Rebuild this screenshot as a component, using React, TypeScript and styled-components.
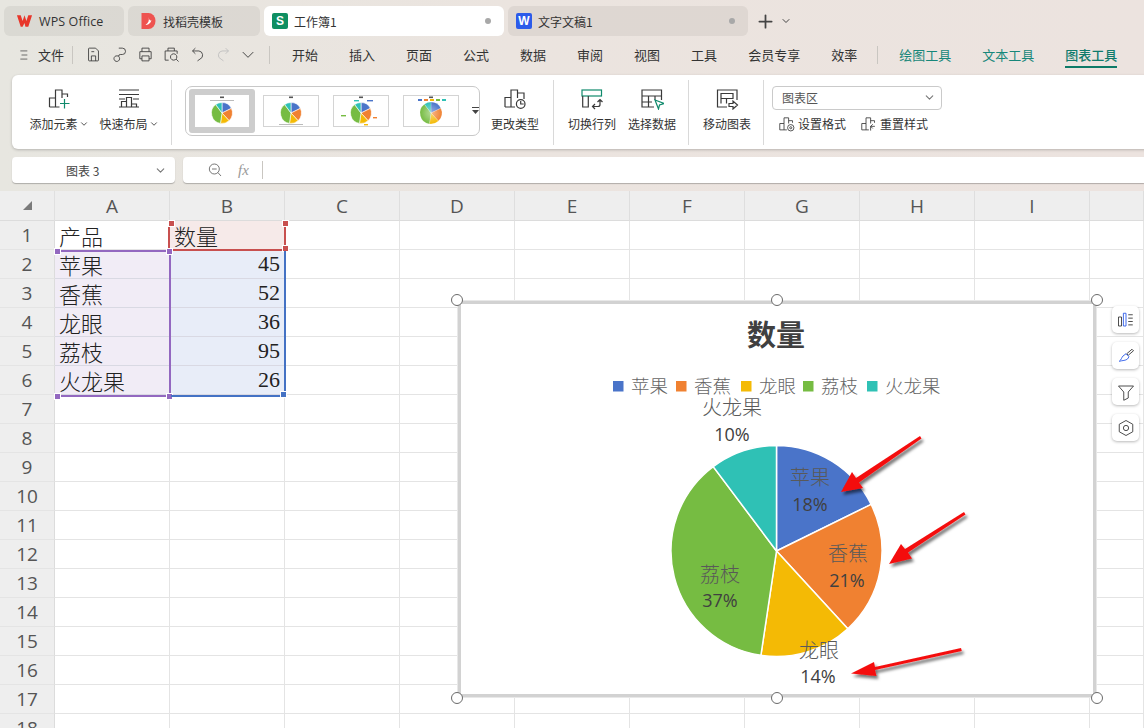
import React from 'react';
import styled, { createGlobalStyle } from 'styled-components';
import { ChevronDown, Plus } from 'lucide-react';

const UI_FONT = '"Noto Sans CJK SC", "Liberation Sans", sans-serif';
const SHEET_FONT = '"Liberation Serif", "Noto Sans CJK SC", serif';

const GlobalStyle = createGlobalStyle`
  html, body { margin: 0; padding: 0; }
  body { font-family: ${UI_FONT}; overflow: hidden; }
`;

const Page = styled.div`
  position: relative;
  width: 1144px;
  height: 728px;
  overflow: hidden;
  background: linear-gradient(90deg, #e7e6e0 0%, #ebe4df 45%, #ece3df 100%);
  color: #333;
`;

/* title bar */
const TabBar = styled.div`
  display: flex;
  align-items: center;
  gap: 4px;
  height: 30px;
  padding: 6px 0 0 4px;
`;

const Tab = styled.div<{ $width: number; $pad?: number; $active?: boolean }>`
  display: flex;
  align-items: center;
  gap: 6px;
  box-sizing: border-box;
  width: ${({ $width }) => $width}px;
  height: 30px;
  padding: 0 10px 0 ${({ $pad }) => $pad ?? 12}px;
  border-radius: 6px;
  background: ${({ $active }) => ($active ? '#fff' : 'rgba(60, 50, 40, 0.07)')};
  font-size: 12px;
  color: #333;
`;

const TabTitle = styled.span`
  flex: 1;
`;

const LatinTitle = styled.span`
  font: 12.5px 'Open Sans', 'Liberation Sans', sans-serif;
  letter-spacing: 0.1px;
`;

const TabDot = styled.i`
  width: 6px;
  height: 6px;
  margin-right: 3px;
  border-radius: 50%;
  background: #a8a8a8;
`;

const LogoSquare = styled.span<{ $color: string }>`
  display: flex;
  align-items: center;
  justify-content: center;
  width: 16px;
  height: 16px;
  border-radius: 2px;
  background: ${({ $color }) => $color};
  color: #fff;
  font: bold 12px 'Liberation Sans', sans-serif;
`;

const NewTab = styled.div`
  display: flex;
  align-items: center;
  gap: 4px;
  margin-left: 3px;
  color: #444;
`;

/* menu row */
const MenuRow = styled.div`
  display: flex;
  align-items: center;
  height: 39px;
  padding: 0 0 2px 18px;
  box-sizing: border-box;
  font-size: 13px;
`;

const FileMenu = styled.div`
  display: flex;
  align-items: center;
  gap: 6px;
  width: 54px;
`;

const Sep = styled.span`
  width: 1px;
  height: 18px;
  background: #c9c6c1;
`;

const ToolSep = styled(Sep)`
  margin-right: -10px;
`;

const QuickTools = styled.div`
  display: flex;
  align-items: center;
  gap: 9px;
  padding: 0 14px 0 12px;
`;

const MenuItems = styled.div`
  display: flex;
  align-items: center;
  gap: 31px;
  margin-left: 22px;
`;

const ToolMenus = styled.div`
  display: flex;
  align-items: center;
  gap: 31px;
  margin-left: 20px;
`;

const ToolMenu = styled.span<{ $active?: boolean }>`
  position: relative;
  color: ${({ $active }) => ($active ? '#0f7b6c' : '#17877a')};
  font-weight: ${({ $active }) => ($active ? 500 : 400)};
  &::after {
    content: '';
    display: ${({ $active }) => ($active ? 'block' : 'none')};
    position: absolute;
    left: 0;
    right: 0;
    bottom: -4px;
    height: 2px;
    background: #0d7a68;
  }
`;

/* ribbon */
const Ribbon = styled.div`
  display: flex;
  align-items: center;
  box-sizing: border-box;
  width: 1140px;
  height: 74px;
  margin-left: 12px;
  border-radius: 6px;
  background: #fff;
  box-shadow: 0 1px 3px rgba(0, 0, 0, 0.22);
`;

const Group = styled.div<{ $width: number; $pad?: number; $end?: boolean }>`
  display: flex;
  flex-direction: ${({ $end }) => ($end ? 'column' : 'row')};
  box-sizing: border-box;
  width: ${({ $width }) => $width}px;
  height: 65px;
  padding-left: ${({ $pad }) => $pad ?? 0}px;
  border-right: ${({ $end }) => ($end ? 'none' : '1px solid #d9d9d9')};
`;

const RibbonButton = styled.div<{ $width: number }>`
  display: flex;
  flex-direction: column;
  align-items: center;
  width: ${({ $width }) => $width}px;
  padding-top: 5px;
  font-size: 12px;
  color: #333;
  white-space: nowrap;
`;

const IconSlot = styled.div`
  display: flex;
  align-items: center;
  justify-content: center;
  height: 26px;
  margin-bottom: 4px;
`;

const Label = styled.span`
  display: flex;
  align-items: center;
  gap: 1px;
  height: 18px;
`;

const Gallery = styled.div`
  display: flex;
  align-items: center;
  box-sizing: border-box;
  width: 295px;
  height: 50px;
  margin-top: 6px;
  padding-left: 2px;
  border: 1px solid #c8c8c8;
  border-radius: 7px;
`;

const Thumb = styled.div<{ $selected?: boolean }>`
  display: flex;
  align-items: center;
  justify-content: center;
  box-sizing: border-box;
  width: ${({ $selected }) => ($selected ? 68 : 56)}px;
  height: ${({ $selected }) => ($selected ? 44 : 32)}px;
  margin-right: ${({ $selected }) => ($selected ? 9 : 15)}px;
  margin-left: ${({ $selected }) => ($selected ? 1 : -1)}px;
  border: ${({ $selected }) => ($selected ? '6px solid #cdcdcd' : '1px solid #d4d4d4')};
  border-radius: ${({ $selected }) => ($selected ? 3 : 0)}px;
  background: #fff;
`;

const GalleryMore = styled.div`
  display: flex;
  flex-direction: column;
  align-items: center;
  margin-left: -3px;
  color: #444;
`;

const AreaSelect = styled.div`
  display: flex;
  align-items: center;
  justify-content: space-between;
  box-sizing: border-box;
  width: 170px;
  height: 24px;
  margin: 6px 0 0 8px;
  padding: 0 5px 0 9px;
  border: 1px solid #cacaca;
  border-radius: 4px;
  font-size: 12px;
  color: #555;
`;

const InlineTools = styled.div`
  display: flex;
  gap: 14px;
  margin: 5px 0 0 14px;
`;

const InlineTool = styled.div`
  display: flex;
  align-items: center;
  gap: 3px;
  font-size: 12px;
`;

/* formula bar */
const FormulaRow = styled.div`
  display: flex;
  gap: 8px;
  height: 26px;
  margin: 8px 0 8px 12px;
`;

const NameBox = styled.div`
  display: flex;
  align-items: center;
  justify-content: space-between;
  box-sizing: border-box;
  width: 163px;
  padding: 0 8px 0 54px;
  border-radius: 4px;
  background: #fff;
  box-shadow: 0 1px 1px rgba(0, 0, 0, 0.25);
  font-size: 12px;
  color: #444;
`;

const FormulaBox = styled.div`
  display: flex;
  align-items: center;
  flex: 1;
  padding-left: 24px;
  border-radius: 4px 0 0 4px;
  background: #fff;
  box-shadow: 0 1px 1px rgba(0, 0, 0, 0.25);
  color: #666;
`;

const FxMark = styled.span`
  margin: 0 13px 0 15px;
  font: italic 15px 'Liberation Serif', serif;
  color: #999;
`;

/* sheet */
const Sheet = styled.div`
  position: relative;
  height: 537px;
  overflow: hidden;
  background: #fff;
`;

const Grid = styled.div`
  display: grid;
  grid-template-columns: 55px repeat(9, 115px) 54px;
  grid-template-rows: 30px repeat(18, 29px);
`;

const Corner = styled.div`
  display: flex;
  align-items: center;
  justify-content: center;
  background: #eeeeee;
  border-right: 1px solid #e0e0e0;
  border-bottom: 1px solid #dcdcdc;
  box-sizing: border-box;
`;

const ColHead = styled.div`
  display: flex;
  align-items: center;
  justify-content: center;
  box-sizing: border-box;
  background: #eeeeee;
  border-right: 1px solid #dedede;
  border-bottom: 1px solid #dcdcdc;
  font: 19px 'Open Sans', 'Liberation Sans', sans-serif;
  color: #555;
`;

const RowHead = styled(ColHead)`
  border-right: 1px solid #dcdcdc;
  border-bottom: 1px solid #e4e4e4;
`;

const Cell = styled.div<{ $bg?: string; $right?: boolean }>`
  display: flex;
  align-items: center;
  justify-content: ${({ $right }) => ($right ? 'flex-end' : 'flex-start')};
  box-sizing: border-box;
  padding: 0 4px;
  background: ${({ $bg }) => $bg ?? '#fff'};
  border-right: 1px solid #e4e4e4;
  border-bottom: 1px solid ${({ $bg }) => ($bg ? '#d9d9e3' : '#e4e4e4')};
  font: 22px ${SHEET_FONT};
  font-weight: 300;
  color: #222;
`;

const Range = styled.div<{
  $x: number;
  $y: number;
  $w: number;
  $h: number;
  $color: string;
  $sides: string;
}>`
  position: absolute;
  left: ${({ $x }) => $x}px;
  top: ${({ $y }) => $y}px;
  width: ${({ $w }) => $w}px;
  height: ${({ $h }) => $h}px;
  box-sizing: border-box;
  border-style: solid;
  border-color: ${({ $color }) => $color};
  border-width: ${({ $sides }) => $sides};
`;

const RangeHandle = styled.i<{ $color: string; $x: number; $y: number }>`
  position: absolute;
  left: ${({ $x }) => $x}px;
  top: ${({ $y }) => $y}px;
  width: 5px;
  height: 5px;
  background: ${({ $color }) => $color};
  border: 1px solid #fff;
`;

const ChartFrame = styled.div`
  position: absolute;
  left: 458px;
  top: 110px;
  width: 638px;
  height: 396px;
  box-sizing: border-box;
  border: 3px solid #d2d2d2;
  background: #fff;
  outline: 1px solid #e8e8e8;
`;

const ChartCanvas = styled.svg`
  position: absolute;
  left: -3px;
  top: -3px;
  overflow: visible;
`;

const SizeHandle = styled.i<{ $x: number; $y: number }>`
  position: absolute;
  left: ${({ $x }) => $x - 6}px;
  top: ${({ $y }) => $y - 6}px;
  width: 10px;
  height: 10px;
  border: 1px solid #6a6a6a;
  border-radius: 50%;
  background: #fff;
`;

const SideTools = styled.div`
  position: absolute;
  left: 1112px;
  top: 115px;
  display: flex;
  flex-direction: column;
  gap: 9px;
`;

const SideTool = styled.div`
  display: flex;
  align-items: center;
  justify-content: center;
  width: 27px;
  height: 27px;
  border-radius: 5px;
  background: #fff;
  box-shadow: 0 1px 3px rgba(0, 0, 0, 0.28);
`;

const ChartLabel = styled.text<{ $size?: number; $bold?: boolean; $color?: string }>`
  font-family: ${SHEET_FONT};
  font-size: ${({ $size }) => $size ?? 20}px;
  font-weight: ${({ $bold }) => ($bold ? 700 : 300)};
  fill: ${({ $color }) => $color ?? '#595959'};
  text-anchor: middle;
`;

const Percent = styled.text`
  font-family: 'Open Sans', 'Liberation Sans', sans-serif;
  font-size: 18px;
  fill: #404040;
  text-anchor: middle;
`;

const LegendText = styled.text`
  font-family: ${SHEET_FONT};
  font-size: 18.5px;
  font-weight: 300;
  fill: #666;
`;

const fruits = [
  { name: '苹果', value: 45, color: '#4a74c9' },
  { name: '香蕉', value: 52, color: '#f08131' },
  { name: '龙眼', value: 36, color: '#f4ba05' },
  { name: '荔枝', value: 95, color: '#76bc42' },
  { name: '火龙果', value: 26, color: '#2fc1b5' },
];

const columns = ['A', 'B', 'C', 'D', 'E', 'F', 'G', 'H', 'I', ''];

const piePaths = (cx: number, cy: number, r: number) => {
  const total = fruits.reduce((sum, f) => sum + f.value, 0);
  let angle = 0;
  return fruits.map(f => {
    const start = angle;
    angle += (f.value / total) * Math.PI * 2;
    const x1 = cx + r * Math.sin(start);
    const y1 = cy - r * Math.cos(start);
    const x2 = cx + r * Math.sin(angle);
    const y2 = cy - r * Math.cos(angle);
    const large = angle - start > Math.PI ? 1 : 0;
    return {
      color: f.color,
      d: `M${cx} ${cy}L${x1} ${y1}A${r} ${r} 0 ${large} 1 ${x2} ${y2}Z`,
    };
  });
};

const MiniPie: React.FC<{ variant: number }> = ({ variant }) => (
  <svg width="54" height="30" viewBox="0 0 54 30">
    <rect x="25" y="0.5" width="4" height="1.6" fill="#555" />
    {variant === 0 && <rect x="15" y="4" width="24" height="1" fill="#bbb" />}
    {variant === 2 && (
      <>
        <rect x="20" y="4" width="5" height="1.4" fill="#2fc1b5" />
        <rect x="33" y="4" width="6" height="1.4" fill="#4a74c9" />
        <rect x="39" y="21" width="4" height="1.4" fill="#f08131" />
        <rect x="7" y="19" width="5" height="1.4" fill="#76bc42" />
        <rect x="30" y="28" width="4" height="1.4" fill="#f4ba05" />
      </>
    )}
    {variant === 3 && (
      <>
        <defs>
          <radialGradient id="thumbGloss">
            <stop offset="0" stopColor="#fff" stopOpacity="0.45" />
            <stop offset="1" stopColor="#fff" stopOpacity="0" />
          </radialGradient>
        </defs>
        {fruits.map((f, i) => (
          <rect key={f.name} x={14 + i * 6} y="3" width="4" height="2" fill={f.color} />
        ))}
      </>
    )}
    {piePaths(27, 17, variant === 3 ? 11 : 10.5).map(p => (
      <path key={p.color} d={p.d} fill={p.color} stroke="#fff" strokeWidth={variant === 3 ? 0.2 : 0.6} />
    ))}
    {variant === 3 && <circle cx="27" cy="17" r="11" fill="url(#thumbGloss)" />}
    {variant === 1 && <rect x="15" y="28" width="24" height="1" fill="#bbb" />}
  </svg>
);

const Ico: React.FC<{ size?: number; children: React.ReactNode; stroke?: string }> = ({
  size = 24,
  children,
  stroke = '#3a3a3a',
}) => (
  <svg width={size} height={size} viewBox="0 0 24 24" fill="none" stroke={stroke} strokeWidth="1.2">
    {children}
  </svg>
);

const ChartBars = () => <path d="M2.5 21V12h6v9M2.5 21h10M8.5 12V4h6.5v8M15 8h5.5v3" />;
const TEAL = '#0f8a6c';

const Toolbar = [
  <path key="s" d="M5 4a1 1 0 0 1 1-1h9l4 4v13a1 1 0 0 1-1 1H6a1 1 0 0 1-1-1zM9 21v-7h6v7M9 8h4" />,
  <path key="a" d="M11 3h5a4 4 0 0 1 0 9h-3a2 2 0 0 0-2 2v1a4 4 0 1 1-4-1h4" />,
  <path key="p" d="M7 8V3h10v5M7 18H4V8h16v10h-3M7 14h10v7H7z" />,
  <path key="q" d="M7 7V3h9v4M8 20H3V7h17v4M15 11a4.5 4.5 0 1 0 .1 0zM18.5 18.5 22 22" />,
  <path key="u" d="M9 3 5 7l4 4M5 7h9a6 6 0 0 1 1.500 11.500L12 21" />,
];

const App: React.FC = () => (
  <Page>
    <GlobalStyle />
    <TabBar>
      <Tab $width={120}>
        <svg width="17" height="14" viewBox="0 0 18 14">
          <path d="M1 1h4l2 6 2-6 2 6 2-6h4l-4 12h-3L9 9l-2 4H5z" fill="#e8362a" />
        </svg>
        <LatinTitle>WPS Office</LatinTitle>
      </Tab>
      <Tab $width={132}>
        <svg width="17" height="18" viewBox="0 0 16 18">
          <path d="M1 1h7a7 8 0 0 1 0 16H1z" fill="#ee5350" />
          <path d="M8 5c1 3 0 6-3 8 2 0 5-1 6-5-1 1-2 1-3-3z" fill="#fff" />
        </svg>
        <span>找稻壳模板</span>
      </Tab>
      <Tab $width={240} $pad={8} $active>
        <LogoSquare $color="#0f8f62">S</LogoSquare>
        <TabTitle>工作簿1</TabTitle>
        <TabDot />
      </Tab>
      <Tab $width={240} $pad={8}>
        <LogoSquare $color="#2c5bea">W</LogoSquare>
        <TabTitle>文字文稿1</TabTitle>
        <TabDot />
      </Tab>
      <NewTab>
        <Plus size={21} strokeWidth={2} />
        <ChevronDown size={12} />
      </NewTab>
    </TabBar>

    <MenuRow>
      <FileMenu>
        <Ico size={14}>
          <path d="M4 5h12M6 12h10M4 19h12" />
        </Ico>
        文件
      </FileMenu>
      <Sep />
      <QuickTools>
        {Toolbar.map((icon, i) => (
          <Ico key={i} size={17}>
            {icon}
          </Ico>
        ))}
        <Ico size={17} stroke="#bdbdbd">
          <path d="M15 3l4 4-4 4M19 7h-9a6 6 0 0 0-1.500 11.500L12 21" />
        </Ico>
        <Ico size={14}>
          <path d="M3 7l9 9 9-9" strokeWidth="1.6" />
        </Ico>
      </QuickTools>
      <Sep />
      <MenuItems>
        {['开始', '插入', '页面', '公式', '数据', '审阅', '视图', '工具', '会员专享', '效率'].map(m => (
          <span key={m}>{m}</span>
        ))}
      </MenuItems>
      <ToolMenus>
        <ToolSep />
        <ToolMenu>绘图工具</ToolMenu>
        <ToolMenu>文本工具</ToolMenu>
        <ToolMenu $active>图表工具</ToolMenu>
      </ToolMenus>
    </MenuRow>

    <Ribbon>
      <Group $width={160} $pad={12}>
        <RibbonButton $width={70}>
          <IconSlot>
            <Ico>
              <ChartBars />
              <path d="M17.5 13v9.500M13 17.500h9.500" stroke={TEAL} />
            </Ico>
          </IconSlot>
          <Label>
            添加元素
            <ChevronDown size={10} />
          </Label>
        </RibbonButton>
        <RibbonButton $width={70}>
          <IconSlot>
            <Ico>
              <path d="M2 4h20M2 8.500h20M2 13h6M16 13h6M2 21h20M4.500 21v-5.500h5M9.500 21V11.500h5V21M14.500 18h5v3" />
            </Ico>
          </IconSlot>
          <Label>
            快速布局
            <ChevronDown size={10} />
          </Label>
        </RibbonButton>
      </Group>
      <Group $width={382} $pad={13}>
        <Gallery>
          <Thumb $selected>
            <MiniPie variant={0} />
          </Thumb>
          {[1, 2, 3].map(v => (
            <Thumb key={v}>
              <MiniPie variant={v} />
            </Thumb>
          ))}
          <GalleryMore>
            <svg width="9" height="9" viewBox="0 0 9 9">
              <path d="M1 1.5h7" stroke="#444" />
              <path d="M1 4h7L4.5 8z" fill="#444" />
            </svg>
          </GalleryMore>
        </Gallery>
        <RibbonButton $width={70}>
          <IconSlot>
            <Ico>
              <path d="M2 21V11.500h6V21M2 21h10M8 11.500V4h6.500v8M14.500 7H21v6" />
              <circle cx="17.700" cy="18" r="4.300" />
              <path d="M17.700 15v3h3" />
            </Ico>
          </IconSlot>
          <Label>更改类型</Label>
        </RibbonButton>
      </Group>
      <Group $width={135} $pad={8}>
        <RibbonButton $width={60}>
          <IconSlot>
            <Ico>
              <rect x="2" y="4" width="19.500" height="6" stroke={TEAL} />
              <path d="M2.700 10v11h5.600V10" />
              <path d="M20 13.500v5a2 2 0 0 1-2 2h-5M17.500 16l2.500-2.500 2.500 2.500M15 18l-2.500 2.500L15 23" />
            </Ico>
          </IconSlot>
          <Label>切换行列</Label>
        </RibbonButton>
        <RibbonButton $width={60}>
          <IconSlot>
            <Ico>
              <path d="M14 21H2V4h19.500v10M2 10h19.500M2 16h10M8.500 10v11M15 10v4" />
              <path d="M15 14l9 3.500-4.500 1.500-1 4z" stroke={TEAL} />
            </Ico>
          </IconSlot>
          <Label>选择数据</Label>
        </RibbonButton>
      </Group>
      <Group $width={75} $pad={3}>
        <RibbonButton $width={70}>
          <IconSlot>
            <Ico>
              <path d="M22 14V4H2.500v17H12M6 17.500V7.500h12v5h-6.500v5M6 12.500h5.500" />
              <path d="M14 17.500h4V15l4.500 4-4.500 4v-2.500h-4z" />
            </Ico>
          </IconSlot>
          <Label>移动图表</Label>
        </RibbonButton>
      </Group>
      <Group $width={360} $end>
        <AreaSelect>
          图表区
          <ChevronDown size={13} color="#777" />
        </AreaSelect>
        <InlineTools>
          <InlineTool>
            <Ico size={17}>
              <ChartBars />
              <circle cx="18" cy="18" r="4.500" />
              <circle cx="18" cy="18" r="1.500" />
            </Ico>
            设置格式
          </InlineTool>
          <InlineTool>
            <Ico size={17}>
              <ChartBars />
              <path d="M15 22v-6h6M15 16l3-3M15 16l3 3" />
            </Ico>
            重置样式
          </InlineTool>
        </InlineTools>
      </Group>
    </Ribbon>

    <FormulaRow>
      <NameBox>
        图表 3
        <ChevronDown size={13} color="#777" />
      </NameBox>
      <FormulaBox>
        <Ico size={16} stroke="#555">
          <circle cx="11" cy="10.500" r="7.500" />
          <path d="M7.500 10.500h7M16.500 16l4.500 5" />
        </Ico>
        <FxMark>fx</FxMark>
        <Sep />
      </FormulaBox>
    </FormulaRow>

    <Sheet>
      <Grid>
        <Corner>
          <svg width="9" height="9" viewBox="0 0 9 9">
            <path d="M9 0v9H0z" fill="#7a7a7a" />
          </svg>
        </Corner>
        {columns.map(c => (
          <ColHead key={c || 'J'}>{c}</ColHead>
        ))}
        {Array.from({ length: 18 }, (_, i) => {
          const fruit = fruits[i - 1];
          return (
            <React.Fragment key={i}>
              <RowHead>{i + 1}</RowHead>
              {columns.map((c, j) => {
                if (i === 0 && j === 0) return <Cell key={j}>产品</Cell>;
                if (i === 0 && j === 1) return <Cell key={j} $bg="#f6eae9">数量</Cell>;
                if (fruit && j === 0) return <Cell key={j} $bg="#f1ecf6">{fruit.name}</Cell>;
                if (fruit && j === 1)
                  return (
                    <Cell key={j} $bg="#e8edf8" $right>
                      {fruit.value}
                    </Cell>
                  );
                return <Cell key={j} />;
              })}
            </React.Fragment>
          );
        })}
      </Grid>

      <Range $x={168} $y={30} $w={118} $h={30} $color="#c8504f" $sides="0 2px 2px 2px">
        <RangeHandle $color="#c8504f" $x={-2} $y={-1} />
        <RangeHandle $color="#c8504f" $x={112} $y={-1} />
        <RangeHandle $color="#c8504f" $x={112} $y={24} />
      </Range>
      <Range $x={55} $y={59} $w={116} $h={147} $color="#9368c0" $sides="2px 2px 2px 0">
        <RangeHandle $color="#9368c0" $x={-1} $y={-4} />
        <RangeHandle $color="#9368c0" $x={111} $y={-4} />
        <RangeHandle $color="#9368c0" $x={-1} $y={141} />
        <RangeHandle $color="#9368c0" $x={111} $y={141} />
      </Range>
      <Range $x={171} $y={60} $w={115} $h={146} $color="#4472c4" $sides="0 2px 2px 0">
        <RangeHandle $color="#4472c4" $x={109} $y={140} />
      </Range>

      <ChartFrame>
        <ChartCanvas width="638" height="396" viewBox="458 301 638 396">
          <defs>
            <filter id="arrowShadow" x="-20%" y="-30%" width="150%" height="170%">
              <feDropShadow dx="2" dy="3" stdDeviation="1.6" floodColor="#000" floodOpacity="0.55" />
            </filter>
          </defs>
          <ChartLabel x="776" y="346" $size={29} $bold $color="#404040">
            数量
          </ChartLabel>
          {fruits.map((f, i) => {
            const squareX = [613, 676, 741, 803, 867][i];
            return (
              <React.Fragment key={f.name}>
                <rect x={squareX} y="381" width="10.5" height="10.5" fill={f.color} />
                <LegendText x={squareX + 18} y="393">
                  {f.name}
                </LegendText>
              </React.Fragment>
            );
          })}
          {piePaths(776.5, 551, 105.5).map(p => (
            <path key={p.color} d={p.d} fill={p.color} stroke="#fff" strokeWidth="1.5" />
          ))}
          <ChartLabel x="732" y="415">火龙果</ChartLabel>
          <Percent x="732" y="441">10%</Percent>
          <ChartLabel x="810" y="485">苹果</ChartLabel>
          <Percent x="810" y="511">18%</Percent>
          <ChartLabel x="848" y="561">香蕉</ChartLabel>
          <Percent x="847" y="587">21%</Percent>
          <ChartLabel x="720" y="582">荔枝</ChartLabel>
          <Percent x="720" y="607">37%</Percent>
          <ChartLabel x="819" y="658">龙眼</ChartLabel>
          <Percent x="818" y="683">14%</Percent>
          <g fill="#f40d0d" filter="url(#arrowShadow)">
            <path d="M920 436l1.5 2.5L859 482.5l4 5.5L841 492l11-20 4 6z" />
            <path d="M964 512l1.5 2.5L908 552.5l4 6L889 564l12-20 4 5z" />
            <path d="M961 648l.8 3L875 670l1.5 6L851 673.5 874 662l1 5z" />
          </g>
        </ChartCanvas>
      </ChartFrame>

      <SizeHandle $x={457} $y={109} />
      <SizeHandle $x={777} $y={109} />
      <SizeHandle $x={1097} $y={109} />
      <SizeHandle $x={457} $y={507} />
      <SizeHandle $x={777} $y={507} />
      <SizeHandle $x={1097} $y={507} />

      <SideTools>
        <SideTool>
          <Ico size={18}>
            <path d="M2 8h4v12H2zM15 5h6M15 9.500h6M15 14h6M15 18.500h6" />
            <path d="M8.500 3h3.500v17H8.500z" stroke="#2c5bea" />
          </Ico>
        </SideTool>
        <SideTool>
          <Ico size={18}>
            <path d="M20 3l2 2-7 6-2-2z" />
            <path d="M12 9l4 4-2 3c-2 2-7 2-11 3 3-2 3-5 5-7z" stroke="#2c5bea" />
          </Ico>
        </SideTool>
        <SideTool>
          <Ico size={18}>
            <path d="M2 4h20l-7 8v8l-6 3V12z" />
          </Ico>
        </SideTool>
        <SideTool>
          <Ico size={18}>
            <path d="M12 2l9 5v10l-9 5-9-5V7z" />
            <circle cx="12" cy="12" r="3.500" />
          </Ico>
        </SideTool>
      </SideTools>
    </Sheet>
  </Page>
);

export default App;
